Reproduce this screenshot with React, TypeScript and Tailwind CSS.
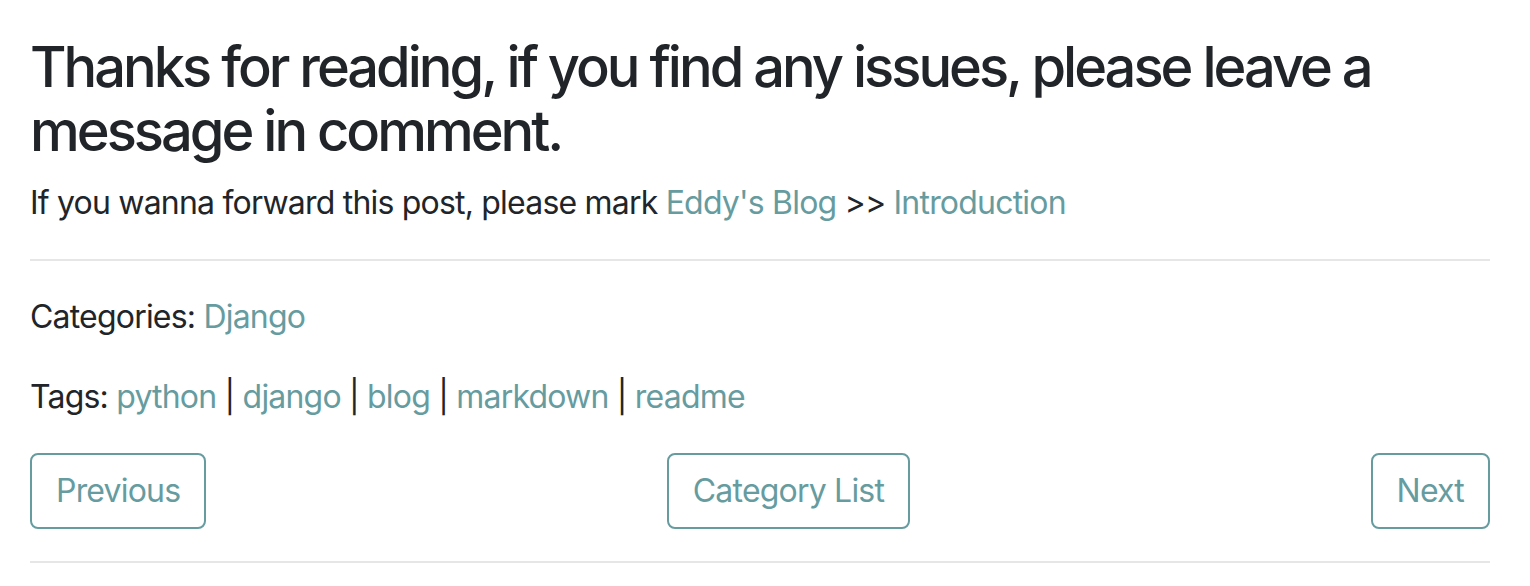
import React from "react";

const LINK = "text-[#669c9f] no-underline";

const tags = ["python", "django", "blog", "markdown", "readme"];

export default function App() {
  return (
    <div className="min-h-screen bg-white pl-[30px] pr-[40px] text-[#212529] font-['Inter','Liberation_Sans',sans-serif] tracking-[-0.8px]">
      {/* Closing notes */}
      <h3 className="pt-[35px] text-[56px] leading-[64px] font-medium tracking-[-3px]">
        Thanks for reading, if you find any issues, please leave a message in comment.
      </h3>
      <p className="mt-[16px] text-[32px] leading-[48px]">
        If you wanna forward this post, please mark{" "}
        <a href="#" className={LINK}>Eddy's Blog</a> &gt;&gt;{" "}
        <a href="#" className={LINK}>Introduction</a>
      </p>

      <hr className="mt-[32px] border-0 border-t-2 border-[#e6e6e6]" />

      {/* Meta */}
      <p className="mt-[32px] text-[32px] leading-[48px]">
        Categories: <a href="#" className={LINK}>Django</a>
      </p>
      <p className="mt-[32px] text-[32px] leading-[48px]">
        Tags:{" "}
        {tags.map((t, i) => (
          <React.Fragment key={t}>
            {i > 0 && " | "}
            <a href="#" className={LINK}>{t}</a>
          </React.Fragment>
        ))}
      </p>

      {/* Pager */}
      <div className="mt-[32px] flex items-center justify-between">
        {["Previous", "Category List", "Next"].map((label) => (
          <a
            key={label}
            href="#"
            className="rounded-[8px] border-2 border-[#669c9f] px-[24px] py-[12px] text-[32px] leading-[48px] text-[#669c9f]"
          >
            {label}
          </a>
        ))}
      </div>

      <hr className="mt-[32px] border-0 border-t-2 border-[#e6e6e6]" />
    </div>
  );
}
